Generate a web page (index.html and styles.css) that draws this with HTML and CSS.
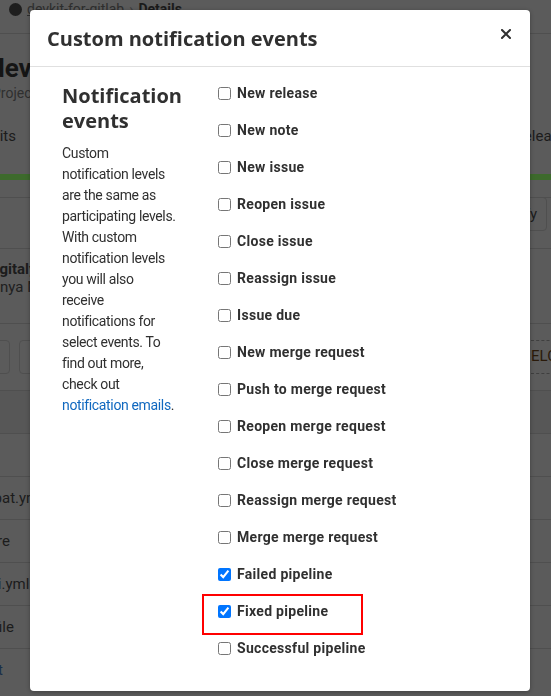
FILE: index.html
```html
<!DOCTYPE html>
<html lang="en">
<head>
<meta charset="utf-8">
<title>Custom notification events</title>
<link rel="stylesheet" href="styles.css">
</head>
<body>
<div class="page">
  <div class="crumbs">
    <span class="avatar"></span>
    <span class="crumb-link">devkit-for-gitlab</span>
    <span class="crumb-sep">›</span>
    <span class="crumb-cur">Details</span>
  </div>
  <div class="project">
    <h1 class="project-title">devkit-for-gitlab</h1>
    <div class="project-id">Project ID: 12345678</div>
  </div>
  <div class="stats">
    <span class="stat">Commits</span>
    <span class="stat stat-right">Releases</span>
  </div>
  <div class="progress"></div>
  <div class="toolbar">
    <span class="tb-btn">Notify</span>
  </div>
  <div class="commit">
    <div class="commit-title">digitaly</div>
    <div class="commit-author">Sanya M</div>
  </div>
  <div class="actions">
    <span class="act-btn a1"></span>
    <span class="act-btn a2">a</span>
    <span class="act-dashed">ELC</span>
  </div>
  <div class="thead"></div>
  <div class="trow"></div>
  <div class="trow"><span class="fname f1">compat.yml</span></div>
  <div class="trow"><span class="fname f2">re</span></div>
  <div class="trow"><span class="fname f3">ci.yml</span></div>
  <div class="trow"><span class="fname f4">file</span></div>
  <div class="trow"><span class="fname f5">t</span></div>
</div>

<div class="modal">
  <div class="modal-header">
    <h2 class="modal-title">Custom notification events</h2>
    <button class="close" aria-label="Close">
      <svg width="10" height="10" viewBox="0 0 10 10"><path d="M1 1 L9 9 M9 1 L1 9" stroke="#303030" stroke-width="2" stroke-linecap="square" fill="none"/></svg>
    </button>
  </div>
  <div class="modal-body">
    <div class="intro">
      <h3 class="intro-title">Notification events</h3>
      <p class="intro-text">Custom<br>notification levels<br>are the same as<br>participating levels.<br>With custom<br>notification levels<br>you will also<br>receive<br>notifications for<br>select events. To<br>find out more,<br>check out<br><a href="#" class="link-blue">notification emails</a>.</p>
    </div>
    <ul class="events">
      <li class="event"><input type="checkbox"><span>New release</span></li>
      <li class="event"><input type="checkbox"><span>New note</span></li>
      <li class="event"><input type="checkbox"><span>New issue</span></li>
      <li class="event"><input type="checkbox"><span>Reopen issue</span></li>
      <li class="event"><input type="checkbox"><span>Close issue</span></li>
      <li class="event"><input type="checkbox"><span>Reassign issue</span></li>
      <li class="event"><input type="checkbox"><span>Issue due</span></li>
      <li class="event"><input type="checkbox"><span>New merge request</span></li>
      <li class="event"><input type="checkbox"><span>Push to merge request</span></li>
      <li class="event"><input type="checkbox"><span>Reopen merge request</span></li>
      <li class="event"><input type="checkbox"><span>Close merge request</span></li>
      <li class="event"><input type="checkbox"><span>Reassign merge request</span></li>
      <li class="event"><input type="checkbox"><span>Merge merge request</span></li>
      <li class="event"><input type="checkbox" checked><span>Failed pipeline</span></li>
      <li class="event highlight"><input type="checkbox" checked><span>Fixed pipeline</span></li>
      <li class="event"><input type="checkbox"><span>Successful pipeline</span></li>
    </ul>
  </div>
</div>
</body>
</html>
```

FILE: styles.css
```css
* { box-sizing: border-box; }
html, body { margin: 0; padding: 0; }
body {
  font-family: Roboto, "Liberation Sans", sans-serif;
  color: #1c1c1c;
  background: #5b5b5b;
  width: 551px;
  height: 696px;
  overflow: hidden;
}

/* ---------- dimmed background page (behind the modal backdrop) ---------- */
.page { width: 551px; }
.crumbs {
  height: 34px;
  border-bottom: 1px solid #4f4f4f;
  display: flex;
  align-items: flex-start;
  gap: 5px;
  padding: 1px 0 0 9px;
  font-size: 14px;
  line-height: 16px;
}
.avatar { width: 13px; height: 13px; border-radius: 50%; background: #1e1e1e; margin-top: 2px; }
.crumb-link { color: #2e2e2e; text-decoration: underline; }
.crumb-sep { color: #3a3a3a; }
.crumb-cur { font-weight: 700; color: #1a1a1a; }
.project { padding-top: 19px; margin-left: -10px; height: 92px; }
.project-title { margin: 0; font-size: 26px; line-height: 30px; font-weight: 700; color: #151515; }
.project-id { font-size: 14px; line-height: 20px; color: #2f2f2f; margin-left: 2px; }
.stats { display: flex; justify-content: space-between; height: 48px; font-size: 15px; line-height: 20px; }
.stat { margin-left: -45px; }
.stat-right { margin-right: -24px; }
.progress { height: 6px; background: #3d6a2c; }
.toolbar {
  height: 52px;
  border-top: 1px solid #4f4f4f;
  border-bottom: 1px solid #4f4f4f;
  margin-top: 17px;
  display: flex;
  justify-content: flex-end;
  align-items: flex-start;
}
.tb-btn {
  border: 1px solid #4f4f4f;
  border-radius: 4px;
  height: 34px;
  width: 70px;
  margin: -1px 4px 0 0;
  display: flex;
  align-items: center;
  justify-content: flex-end;
  padding-right: 9px;
  font-size: 15px;
  overflow: hidden;
  white-space: nowrap;
}
.commit { height: 75px; border-bottom: 1px solid #4f4f4f; padding-top: 11px; font-size: 15px; line-height: 18px; }
.commit-title { font-weight: 700; margin-left: -13px; }
.commit-author { color: #202020; margin-left: -17px; }
.actions { height: 66px; display: flex; gap: 9px; padding-top: 16px; }
.act-btn { border: 1px solid #4f4f4f; border-radius: 4px; height: 34px; width: 34px; display: inline-flex; align-items: center; padding-left: 10px; }
.a1 { margin-left: -24px; }
.act-dashed {
  margin-left: auto;
  border-top: 1px dashed #3f3f3f;
  border-bottom: 1px dashed #3f3f3f;
  height: 34px;
  padding: 6px 0 0 0;
  width: 60px;
  margin-right: -40px;
  font-size: 15px;
  color: #2a1a0a;
}
.thead { height: 43px; background: #575757; border-top: 1px solid #4f4f4f; }
.trow {
  height: 43px;
  border-top: 1px solid #4f4f4f;
  display: flex;
  align-items: center;
  font-size: 15px;
  white-space: nowrap;
}
.f1 { margin-left: -36px; }
.f2 { margin-left: -3px; }
.f3 { margin-left: -10px; }
.f4 { margin-left: -6px; }
.f5 { margin-left: -2px; color: #1a2e48; }

/* ---------- modal ---------- */
.modal {
  position: fixed;
  left: 30px;
  top: 10px;
  width: 500px;
  height: 681px;
  background: #fff;
  border-radius: 4px;
  box-shadow: 0 1px 4px rgba(0,0,0,0.3);
}
.modal-header {
  height: 57px;
  border-bottom: 1px solid #e0e0e0;
  display: flex;
  align-items: center;
  justify-content: space-between;
  padding: 2px 19px 0 17px;
}
.modal-title {
  margin: 0;
  font-family: "Open Sans", Roboto, sans-serif;
  font-size: 20px;
  font-weight: 700;
  color: #303030;
  line-height: 24px;
}
.close {
  border: 0;
  background: transparent;
  padding: 0;
  width: 10px;
  height: 10px;
  display: flex;
  margin-top: -10px;
}
.modal-body {
  display: flex;
  padding: 16px 16px 0 32px;
}
.intro { width: 150px; flex: none; }
.intro-title {
  margin: 0;
  font-family: "Open Sans", Roboto, sans-serif;
  font-size: 20px;
  line-height: 25px;
  font-weight: 700;
  color: #303030;
}
.intro-text { margin: 10px 0 0 0; font-size: 14px; line-height: 21px; letter-spacing: -0.35px; color: #303030; }
.link-blue { color: #1068bf; text-decoration: none; }
.events { list-style: none; margin: 0 0 0 2px; padding: 0; }
.event {
  display: flex;
  align-items: center;
  height: 20px;
  margin-bottom: 17px;
  font-size: 14px;
  font-weight: 700;
  letter-spacing: 0.3px;
  color: #303030;
  position: relative;
}
.event input { margin: 0 6px 0 4px; width: 13px; height: 13px; }
.highlight::after {
  content: "";
  position: absolute;
  left: -12px;
  top: -7px;
  width: 157px;
  height: 37px;
  border: 2px solid #f00;
}
```
